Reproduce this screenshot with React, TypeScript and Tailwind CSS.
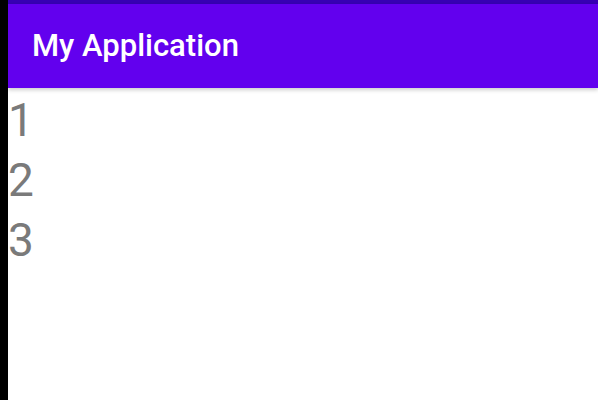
import React from 'react';

const items = ['1', '2', '3'];

const App: React.FC = () => {
  return (
    <div className="flex h-[400px] w-full bg-white" style={{ fontFamily: 'Roboto, "Noto Sans", sans-serif' }}>
      {/* left edge */}
      <div className="w-2 shrink-0 bg-black" />

      <div className="flex flex-1 flex-col">
        {/* status bar */}
        <div className="h-1 bg-[#3700B3]" />

        {/* toolbar */}
        <div className="relative z-10 flex h-[84px] items-center bg-[#6200EE] px-6 shadow-[0_2px_4px_rgba(0,0,0,0.2)]">
          <span className="text-[31px] font-medium text-white">My Application</span>
        </div>

        {/* list */}
        <div className="flex flex-col pt-[2px]">
          {items.map((item) => (
            <div key={item} className="text-[46px] leading-[60px] text-[#7a7a7a]">
              {item}
            </div>
          ))}
        </div>
      </div>
    </div>
  );
};

export default App;
